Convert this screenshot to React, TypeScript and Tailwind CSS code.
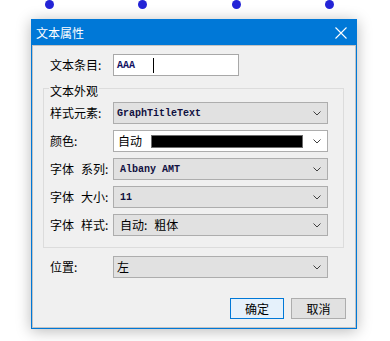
const cjk = "font-['Noto_Sans_CJK_SC','Noto_Sans',sans-serif]";
const mono = "font-['Liberation_Mono',monospace]";

const Chevron = () => (
  <svg width="8" height="5" viewBox="0 0 8 5" className="shrink-0">
    <path d="M0.5 0.5 L4 4 L7.5 0.5" fill="none" stroke="#404040" strokeWidth="1" />
  </svg>
);

const CloseIcon = () => (
  <svg width="12" height="12" viewBox="0 0 12 12">
    <path d="M0.5 0.5 L11.5 11.5 M11.5 0.5 L0.5 11.5" stroke="white" strokeWidth="1.1" />
  </svg>
);

const Select = ({ children, white }: { children: React.ReactNode; white?: boolean }) => (
  <div
    className={
      'w-[215px] h-[22px] border border-[#adadad] flex items-center pr-[6px] ' +
      (white ? 'bg-white' : 'bg-[#e1e1e1]')
    }
  >
    <div className="flex-1 min-w-0 flex items-center">{children}</div>
    <Chevron />
  </div>
);

const Row = ({ label, children }: { label: React.ReactNode; children: React.ReactNode }) => (
  <div className="flex items-center h-[22px]">
    <span className="w-[63px] flex items-center text-[12px] leading-none text-black whitespace-pre">{label}</span>
    {children}
  </div>
);

const TwoPart = ({ a, b }: { a: string; b: string }) => (
  <>
    <span>{a}</span>
    <span className="ml-[7px]">{b}</span>
  </>
);

export default function App() {
  return (
    <div className={'w-[390px] h-[341px] bg-white overflow-hidden ' + cjk}>
      {/* resize handles */}
      <div className="flex h-[9px]">
        <div className="ml-[45px] w-[9px] h-[9px] rounded-full bg-[#2323d6]" />
        <div className="ml-[84px] w-[9px] h-[9px] rounded-full bg-[#2323d6]" />
        <div className="ml-[85px] w-[9px] h-[9px] rounded-full bg-[#2323d6]" />
        <div className="ml-[84px] w-[9px] h-[9px] rounded-full bg-[#2323d6]" />
      </div>

      <div className="mt-[10px] ml-[31px] w-[326px] h-[310px] border border-[#0078d7] bg-[#f0f0f0] flex flex-col shadow-[0_2px_14px_rgba(0,0,0,0.28)]">
        <div className="h-[25px] bg-[#0078d7] flex items-center justify-between pl-[4px] pr-[9px]">
          <span className="text-[12px] text-white leading-none">文本属性</span>
          <CloseIcon />
        </div>

        <div className="flex-1 border border-[#c3c3c3] flex flex-col">
          {/* text entry */}
          <div className="mt-[8px] pl-[17px]">
            <Row label="文本条目:">
              <div className="w-[126px] h-[22px] bg-white border border-[#a8a8a8] flex items-center pl-[3px]">
                <span className={'text-[10px] text-[#101060] font-bold ' + mono}>AAA</span>
                <span className="ml-[18px] w-px h-[15px] bg-black" />
              </div>
            </Row>
          </div>

          {/* group box */}
          <div className="relative mt-[12px] ml-[10px] w-[301px] h-[160px] border border-[#dcdcdc] pt-[13px] pl-[6px] flex flex-col gap-[6px]">
            <span className="absolute top-[-6px] left-[5px] px-[1px] bg-[#f0f0f0] text-[12px] leading-[16px] text-black">
              文本外观
            </span>
            <Row label="样式元素:">
              <Select>
                <span className={'pl-[3px] text-[10px] font-bold text-[#101040] ' + mono}>GraphTitleText</span>
              </Select>
            </Row>
            <Row label="颜色:">
              <Select white>
                <span className="pl-[4px] text-[12px] leading-none text-black">自动</span>
                <span className="ml-[9px] w-[152px] h-[13px] bg-black border border-[#6e6e6e]" />
              </Select>
            </Row>
            <Row label={<TwoPart a="字体" b="系列:" />}>
              <Select>
                <span className={'pl-[6px] text-[10px] font-bold text-[#101040] ' + mono}>Albany AMT</span>
              </Select>
            </Row>
            <Row label={<TwoPart a="字体" b="大小:" />}>
              <Select>
                <span className={'pl-[6px] text-[10px] font-bold text-[#101040] ' + mono}>11</span>
              </Select>
            </Row>
            <Row label={<TwoPart a="字体" b="样式:" />}>
              <Select>
                <span className="pl-[6px] flex items-center text-[12px] leading-none text-black">
                  <span>自动:</span>
                  <span className="ml-[7px]">粗体</span>
                </span>
              </Select>
            </Row>
          </div>

          {/* position */}
          <div className="mt-[8px] pl-[17px]">
            <Row label="位置:">
              <Select>
                <span className="pl-[3px] text-[12px] leading-none text-black">左</span>
              </Select>
            </Row>
          </div>

          {/* buttons */}
          <div className="mt-[20px] flex justify-end gap-[7px] pr-[9px]">
            <button className="w-[54px] h-[21px] border border-[#0078d7] bg-[#e5f1fb] text-[12px] leading-none text-black">
              确定
            </button>
            <button className="w-[55px] h-[21px] border border-[#adadad] bg-[#e1e1e1] text-[12px] leading-none text-black">
              取消
            </button>
          </div>
        </div>
      </div>
    </div>
  );
}
